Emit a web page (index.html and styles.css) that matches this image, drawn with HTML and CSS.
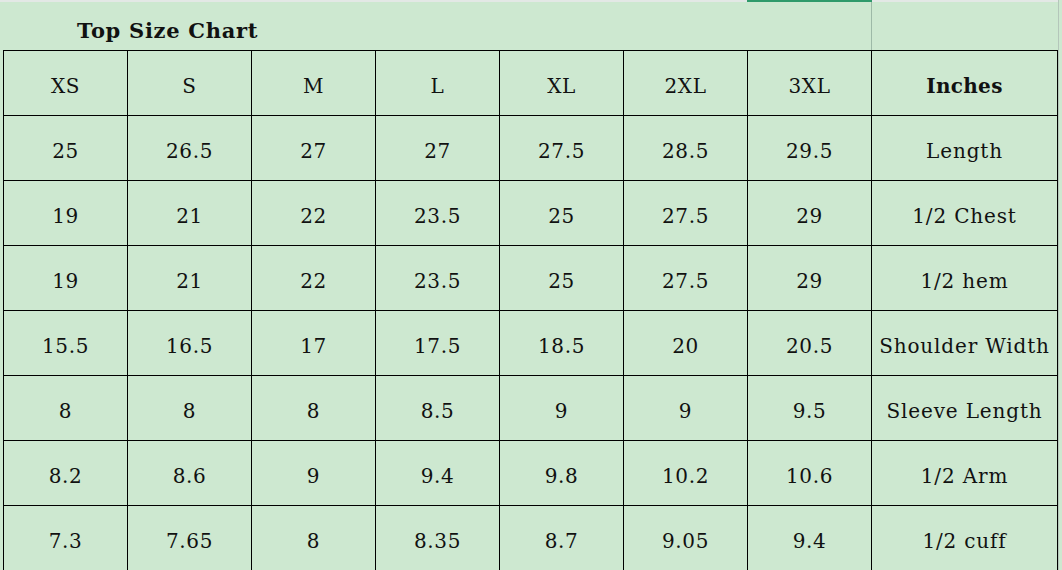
FILE: index.html
```html
<!DOCTYPE html>
<html>
<head>
<meta charset="utf-8">
<link rel="stylesheet" href="styles.css">
</head>
<body>
<div class="sheet">
  <div class="topbar"><div class="tab"></div></div>
  <div class="title-row">
    <div class="title">Top Size Chart</div>
    <div class="title-side"></div>
  </div>
  <div class="grid">
    <div class="cell">XS</div><div class="cell">S</div><div class="cell">M</div><div class="cell">L</div><div class="cell">XL</div><div class="cell">2XL</div><div class="cell">3XL</div><div class="cell label bold">Inches</div>
    <div class="cell">25</div><div class="cell">26.5</div><div class="cell">27</div><div class="cell">27</div><div class="cell">27.5</div><div class="cell">28.5</div><div class="cell">29.5</div><div class="cell label">Length</div>
    <div class="cell">19</div><div class="cell">21</div><div class="cell">22</div><div class="cell">23.5</div><div class="cell">25</div><div class="cell">27.5</div><div class="cell">29</div><div class="cell label">1/2 Chest</div>
    <div class="cell">19</div><div class="cell">21</div><div class="cell">22</div><div class="cell">23.5</div><div class="cell">25</div><div class="cell">27.5</div><div class="cell">29</div><div class="cell label">1/2 hem</div>
    <div class="cell">15.5</div><div class="cell">16.5</div><div class="cell">17</div><div class="cell">17.5</div><div class="cell">18.5</div><div class="cell">20</div><div class="cell">20.5</div><div class="cell label">Shoulder Width</div>
    <div class="cell">8</div><div class="cell">8</div><div class="cell">8</div><div class="cell">8.5</div><div class="cell">9</div><div class="cell">9</div><div class="cell">9.5</div><div class="cell label">Sleeve Length</div>
    <div class="cell">8.2</div><div class="cell">8.6</div><div class="cell">9</div><div class="cell">9.4</div><div class="cell">9.8</div><div class="cell">10.2</div><div class="cell">10.6</div><div class="cell label">1/2 Arm</div>
    <div class="cell">7.3</div><div class="cell">7.65</div><div class="cell">8</div><div class="cell">8.35</div><div class="cell">8.7</div><div class="cell">9.05</div><div class="cell">9.4</div><div class="cell label">1/2 cuff</div>
  </div>
</div>
</body>
</html>
```

FILE: styles.css
```css
html, body {
  margin: 0;
  padding: 0;
  background: #cde8d0;
  overflow: hidden;
  height: 570px;
}

body {
  font-family: "DejaVu Serif", serif;
  color: #111;
}

.sheet {
  width: 1058px;
  border-right: 1px solid #b4c6ba;
  height: 570px;
}

.topbar {
  height: 2px;
  background: #e3e8e5;
  display: flex;
}

.tab {
  margin-left: 747px;
  width: 125px;
  background: #2f9a6b;
}

.title-row {
  display: flex;
  height: 48px;
}

.title {
  width: 871px;
  box-sizing: border-box;
  padding-left: 77px;
  padding-top: 8px;
  display: flex;
  align-items: center;
  font-weight: bold;
  font-size: 21px;
  letter-spacing: 0.7px;
}

.title-side {
  flex: 1;
  border-left: 1px solid #9db9a7;
}

.grid {
  margin-left: 3px;
  display: grid;
  grid-template-columns: repeat(7, 123px) 185px;
  grid-auto-rows: 64px;
  gap: 1px;
  padding: 1px;
  background: #000;
  width: max-content;
}

.cell {
  background: #cde8d0;
  display: flex;
  align-items: center;
  justify-content: center;
  padding-top: 5px;
  box-sizing: border-box;
  font-size: 20px;
  letter-spacing: 0.6px;
  white-space: nowrap;
}

.label {
  letter-spacing: 0.85px;
}

.bold {
  font-weight: bold;
  letter-spacing: 0.3px;
}
```
